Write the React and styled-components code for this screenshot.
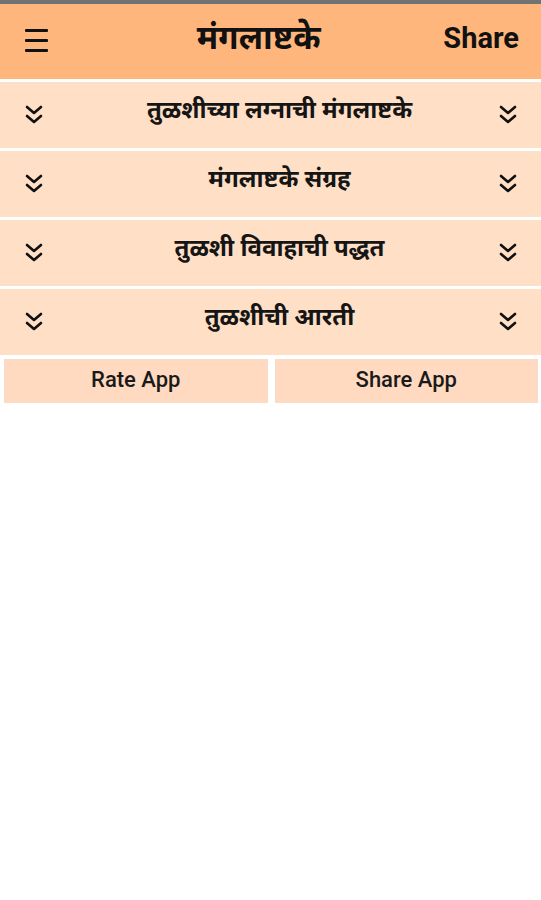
import styled, { createGlobalStyle } from "styled-components";

const items = [
    "तुळशीच्या लग्नाची मंगलाष्टके",
    "मंगलाष्टके संग्रह",
    "तुळशी विवाहाची पद्धत",
    "तुळशीची आरती",
];

const DoubleChevron = () => (
    <svg width="22" height="22" viewBox="0 0 22 22" fill="none" stroke="#111" strokeWidth="2.6" strokeLinecap="round" strokeLinejoin="round">
        <polyline points="4,3 11,9 18,3" />
        <polyline points="4,12 11,18 18,12" />
    </svg>
);

const App = () => {
    return (
        <Page>
            <GlobalStyle />
            <StatusBar />
            <Header>
                <Menu>
                    <MenuLine />
                    <MenuLine />
                    <MenuLine />
                </Menu>
                <Title>मंगलाष्टके</Title>
                <ShareLink>Share</ShareLink>
            </Header>

            <List>
                {items.map((item, index) => (
                    <Row key={index}>
                        <DoubleChevron />
                        <RowText>{item}</RowText>
                        <DoubleChevron />
                    </Row>
                ))}
            </List>

            <Buttons>
                <Button>Rate App</Button>
                <Button>Share App</Button>
            </Buttons>
        </Page>
    );
}

const GlobalStyle = createGlobalStyle`
    body {
        margin: 0;
        background: #ffffff;
        font-family: Roboto, "Noto Sans", "Noto Sans Devanagari", sans-serif;
    }
`

const Page = styled.div`
    width: 541px;
    min-height: 900px;
    background: #ffffff;
    display: flex;
    flex-direction: column;
`

const StatusBar = styled.div`
    height: 4px;
    background-color: #707371;
`

const Header = styled.header`
    height: 75px;
    background-color: #ffb67c;
    display: flex;
    align-items: center;
    justify-content: space-between;
    padding: 0 22px 0 25px;
`

const Menu = styled.div`
    width: 23px;
    display: flex;
    flex-direction: column;
    gap: 7px;
    margin-bottom: 2px;
`

const MenuLine = styled.span`
    display: block;
    height: 3px;
    border-radius: 1px;
    background-color: #111;
`

const Title = styled.h1`
    margin: 0 0 2px 26px;
    font-size: 33px;
    font-weight: 700;
    color: #111;
    font-family: "Noto Sans Devanagari", "Lohit Devanagari", "Noto Sans", sans-serif;
`

const ShareLink = styled.span`
    font-size: 29px;
    font-weight: 700;
    color: #111;
    margin-bottom: 8px;
`

const List = styled.div`
    display: flex;
    flex-direction: column;
    gap: 3px;
    padding-top: 3px;
`

const Row = styled.div`
    height: 66px;
    background-color: #ffdfc6;
    display: flex;
    align-items: center;
    justify-content: space-between;
    padding: 0 22px 0 23px;
`

const RowText = styled.span`
    font-size: 24px;
    font-weight: 700;
    color: #151515;
    margin: 0 0 6px 17px;
    font-family: "Noto Sans Devanagari", "Lohit Devanagari", "Noto Sans", sans-serif;
`

const Buttons = styled.div`
    display: flex;
    gap: 7px;
    padding: 4px 3px 0 4px;
`

const Button = styled.button`
    flex: 1;
    height: 44px;
    border: 1px solid #f6dccb;
    background-color: #ffdac0;
    color: #1a1a1a;
    font-family: Roboto, "Liberation Sans", sans-serif;
    font-size: 22px;
    font-weight: 500;
    padding: 0 0 3px;
    cursor: pointer;
`

export default App;
